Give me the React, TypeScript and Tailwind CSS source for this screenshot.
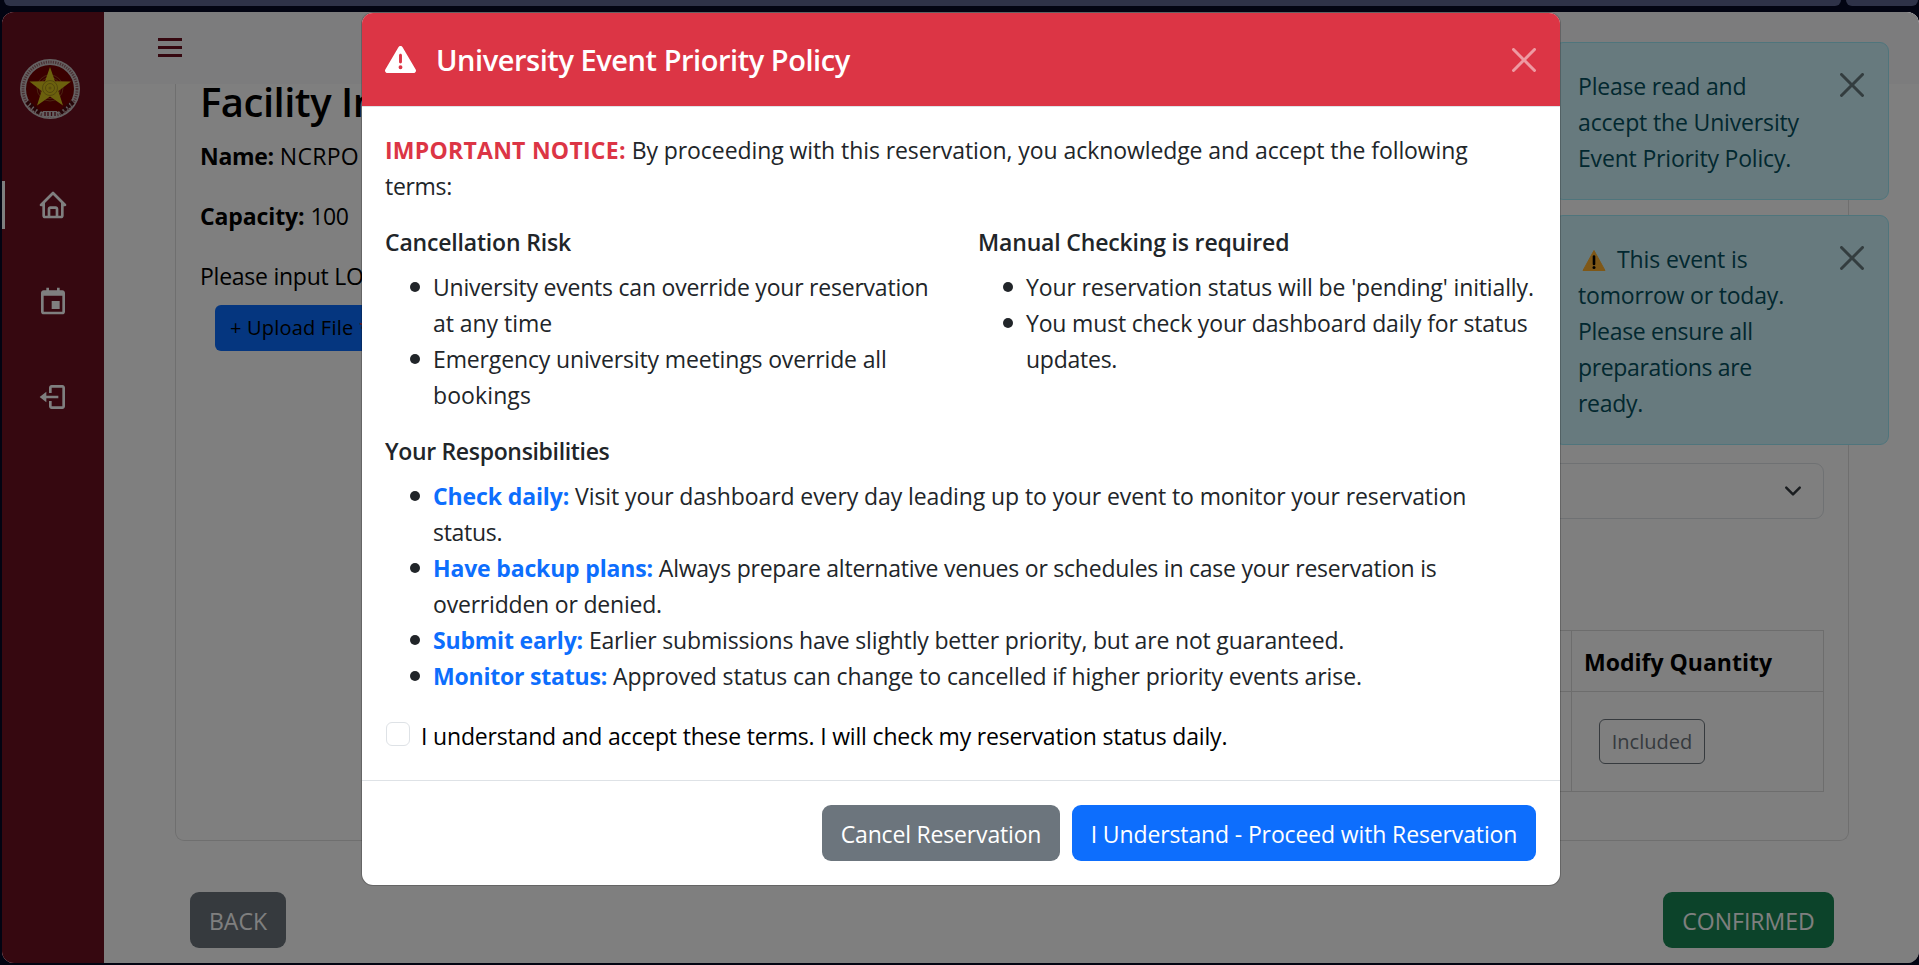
import type { ReactNode } from "react";
import { BiCalendarEvent, BiHome } from "react-icons/bi";
import { FaTriangleExclamation } from "react-icons/fa6";

function ExitIcon() {
  return (
    <svg viewBox="0 0 24 24" className="size-8" fill="currentColor" aria-hidden="true">
      <path d="m2 12 5 4v-3h9v-2H7V8z" />
      <path d="M19 3h-8c-1.1 0-2 .9-2 2v4h2V5h8v14h-8v-4H9v4c0 1.1.9 2 2 2h8c1.1 0 2-.9 2-2V5c0-1.1-.9-2-2-2z" />
    </svg>
  );
}

function CloseIcon({ className }: { className: string }) {
  return (
    <svg viewBox="0 0 16 16" className={className} fill="currentColor" aria-hidden="true">
      <path d="M.293.293a1 1 0 0 1 1.414 0L8 6.586 14.293.293a1 1 0 1 1 1.414 1.414L9.414 8l6.293 6.293a1 1 0 0 1-1.414 1.414L8 9.414l-6.293 6.293a1 1 0 0 1-1.414-1.414L6.586 8 .293 1.707a1 1 0 0 1 0-1.414z" />
    </svg>
  );
}

function Seal() {
  return (
    <svg viewBox="0 0 60 60" className="size-[60px]" aria-hidden="true">
      <circle cx="30" cy="30" r="30" fill="#cbc3c4" />
      <circle cx="30" cy="30" r="27" fill="none" stroke="#7a3038" strokeWidth="2.8" strokeDasharray="1.3 1.1" opacity=".65" />
      <circle cx="30" cy="30" r="24" fill="#740000" />
      <path d="M7 43 20 54M53 43 40 54" stroke="#4a0a10" strokeWidth="4.5" strokeDasharray="3 1.5" />
      <rect x="23" y="52" width="14" height="6" fill="#cbc3c4" />
      <path d="M25 53v4M28 53v4M31.500 53v4M35 53v4" stroke="#6d1020" strokeWidth="1.3" />
      <circle cx="30" cy="29" r="13" fill="none" stroke="#a05a2a" strokeWidth=".8" />
      <circle cx="30" cy="29" r="10.500" fill="none" stroke="#a05a2a" strokeWidth=".8" />
      <path d="m30 8 5 14.200 16 .3-12.600 9.500L43 46.500l-13-9-13 9L21.600 32 9.500 22.500l15.500-.3z" fill="#d8c21a" />
      <circle cx="30" cy="29" r="7.500" fill="none" stroke="#a8901a" strokeWidth="1" />
      <circle cx="30" cy="29" r="4.500" fill="none" stroke="#a8901a" strokeWidth="1" />
      <circle cx="30" cy="29" r="1.500" fill="#b49a1c" />
    </svg>
  );
}

function WarningEmoji() {
  return (
    <svg viewBox="0 0 24 22" className="mr-[11px] ml-1 inline-block h-[22px] w-6 align-[-3px]" aria-hidden="true">
      <path d="M12 1.500 23 21.500H1z" fill="#ffb02e" stroke="#ffb02e" strokeWidth="1" strokeLinejoin="round" />
      <path d="M12 7.500v7.500" stroke="#000" strokeWidth="2.600" strokeLinecap="round" />
      <circle cx="12" cy="18.600" r="1.500" fill="#000" />
    </svg>
  );
}

function Line({ className = "", children }: { className?: string; children: ReactNode }) {
  return <span className={`block whitespace-nowrap ${className}`}>{children}</span>;
}

function Item({ children }: { children: ReactNode }) {
  return (
    <li className="flex">
      <span className="mt-[13px] mr-[13px] ml-[25px] size-[10px] shrink-0 rounded-full bg-[#212529]" />
      <div>{children}</div>
    </li>
  );
}

function Alert({ className, children }: { className: string; children: ReactNode }) {
  return (
    <div
      className={`flex w-[335px] justify-between rounded-[9px] border border-[#9eeaf9] bg-[#cff4fc] pt-[25px] pr-6 pb-[23px] pl-[23px] text-[#055160] ${className}`}
    >
      <div>{children}</div>
      <CloseIcon className="mt-[5px] size-6 shrink-0 text-black/50" />
    </div>
  );
}

export default function App() {
  return (
    <div className="relative flex h-[965px] w-[1919px] flex-col overflow-hidden bg-[#020412] font-['Open_Sans','Noto_Sans',sans-serif] text-[23px] leading-9 text-black">
      <div className="flex h-3 shrink-0 gap-[5px] pl-1">
        <div className="h-1.5 w-[1837px] rounded-b-[10px] bg-[#2e3248]" />
        <div className="h-1.5 w-[72px] rounded-b-[10px] bg-[#2e3248]" />
      </div>

      <div className="relative ml-0.5 flex h-[951px] shrink-0 overflow-hidden rounded-[12px] bg-white">
        <aside className="flex w-[102px] shrink-0 flex-col bg-[#6d1020] text-white">
          <div className="flex h-[169px] justify-center pt-[47px] pr-[6px]">
            <Seal />
          </div>
          <nav className="flex flex-col gap-12">
            <div className="flex h-12 items-center border-l-[3px] border-white pl-8">
              <BiHome className="size-8" />
            </div>
            <div className="flex h-12 items-center pl-[35px]">
              <BiCalendarEvent className="size-8" />
            </div>
            <div className="flex h-12 items-center pl-[35px]">
              <ExitIcon />
            </div>
          </nav>
        </aside>

        <main className="flex w-[1815px] flex-col">
          <header className="flex h-[72px] shrink-0 flex-col gap-[5px] bg-[#f8f8fb] pt-[26px] pl-[54px]">
            <span className="h-[3px] w-6 bg-[#6d1020]" />
            <span className="h-[3px] w-6 bg-[#6d1020]" />
            <span className="h-[3px] w-6 bg-[#6d1020]" />
          </header>

          <section className="ml-[71px] flex h-[757px] w-[1674px] shrink-0 justify-between rounded-b-[9px] border border-t-0 border-[#dfdfdf] pl-6">
            <div className="w-[420px]">
              <h2 className="-mt-[6px] text-[40px] leading-[48px] font-semibold tracking-[-0.5px] whitespace-nowrap">Facility Information</h2>
              <p className="mt-3 whitespace-nowrap">
                <strong className="tracking-[-0.3px]">Name:</strong> <span className="tracking-[0.3px]">NCRPO</span>
              </p>
              <p className="mt-6 whitespace-nowrap">
                <strong className="tracking-[-0.1px]">Capacity:</strong> <span className="tracking-[-0.6px]">100</span>
              </p>
              <p className="mt-6 tracking-[-0.25px] whitespace-nowrap">Please input LOI</p>
              <button className="mt-[11px] ml-[15px] block h-[46px] w-[160px] rounded-md bg-[#0a6cff] pl-[15px] text-left text-[20px] tracking-[0.2px] whitespace-nowrap">
                + Upload File <span className="text-[#dc3545]">*</span>
              </button>
            </div>

            <div className="flex w-[300px] flex-col pt-[379px] pr-[24px]">
              <div className="flex h-14 items-center justify-end rounded-[9px] border border-[#dee2e6] pr-[21px]">
                <svg viewBox="0 0 16 16" className="size-[18px]" fill="none" stroke="#343a40" strokeWidth="2.200" strokeLinecap="round" strokeLinejoin="round" aria-hidden="true">
                  <path d="m2 5 6 6 6-6" />
                </svg>
              </div>
              <div className="mt-[111px] grid h-[162px] grid-cols-[1fr_251px] grid-rows-[61px_1fr] border border-[#dadada]">
                <div className="border-r border-b border-[#dadada]" />
                <div className="border-b border-[#dadada] pt-[13px] pl-3 font-bold whitespace-nowrap">Modify Quantity</div>
                <div className="border-r border-[#dadada]" />
                <div className="pt-[27px] pl-[27px]">
                  <button className="flex h-[45px] w-[106px] items-center justify-center rounded-md border border-[#6c757d] text-[20px] text-[#6c757d]">
                    Included
                  </button>
                </div>
              </div>
            </div>
          </section>

          <div className="mt-[51px] flex justify-between pr-[85px] pl-[86px] text-white">
            <button className="h-14 w-24 rounded-[9px] bg-[#6c757d] pt-px">BACK</button>
            <button className="h-14 w-[171px] rounded-[9px] bg-[#198754] pt-px">CONFIRMED</button>
          </div>
        </main>

        <div className="absolute top-[30px] right-[30px] flex flex-col gap-[15px]">
          <Alert className="h-[158px]">
            <Line className="tracking-[-0.2px]">Please read and</Line>
            <Line className="tracking-[-0.15px]">accept the University</Line>
            <Line className="tracking-[-0.18px]">Event Priority Policy.</Line>
          </Alert>
          <Alert className="h-[230px]">
            <Line className="tracking-[-0.1px]">
              <WarningEmoji />
              This event is
            </Line>
            <Line className="tracking-[-0.18px]">tomorrow or today.</Line>
            <Line className="tracking-[-0.3px]">Please ensure all</Line>
            <Line className="tracking-[-0.35px]">preparations are</Line>
            <Line className="tracking-[-0.3px]">ready.</Line>
          </Alert>
        </div>

        <div className="absolute inset-0 bg-black/50" />
      </div>

      <div className="absolute top-3 left-[361px] flex h-[874px] w-[1200px] flex-col overflow-hidden rounded-[12px] border border-black/20 bg-white bg-clip-padding text-[#212529]">
        <div className="flex h-[94px] shrink-0 items-center justify-between border-b border-[#dee2e6] bg-[#dc3545] pr-6 pl-[23px] text-white">
          <div className="flex items-center">
            <FaTriangleExclamation className="size-[31px]" />
            <h1 className="ml-5 text-[29px] font-semibold tracking-[-0.45px] whitespace-nowrap">University Event Priority Policy</h1>
          </div>
          <CloseIcon className="size-6 text-white/50" />
        </div>

        <div className="flex h-[673px] shrink-0 flex-col pt-[25px] pl-[23px]">
          <p>
            <Line>
              <strong className="tracking-[0.25px] text-[#dc3545]">IMPORTANT NOTICE:</strong>{" "}
              <span className="tracking-[-0.08px]">By proceeding with this reservation, you acknowledge and accept the following</span>
            </Line>
            <Line className="tracking-[-0.3px]">terms:</Line>
          </p>

          <div className="mt-5 flex">
            <div className="w-[593px]">
              <h2 className="mb-[9px] leading-9 font-semibold tracking-[-0.18px]">Cancellation Risk</h2>
              <ul>
                <Item>
                  <Line className="tracking-[-0.22px]">University events can override your reservation</Line>
                  <Line className="tracking-[-0.05px]">at any time</Line>
                </Item>
                <Item>
                  <Line className="tracking-[-0.14px]">Emergency university meetings override all</Line>
                  <Line className="tracking-[0.1px]">bookings</Line>
                </Item>
              </ul>
            </div>
            <div>
              <h2 className="mb-[9px] leading-9 font-semibold tracking-[-0.17px]">Manual Checking is required</h2>
              <ul>
                <Item>
                  <Line className="tracking-[-0.13px]">Your reservation status will be 'pending' initially.</Line>
                </Item>
                <Item>
                  <Line className="tracking-[-0.17px]">You must check your dashboard daily for status</Line>
                  <Line className="tracking-[-0.25px]">updates.</Line>
                </Item>
              </ul>
            </div>
          </div>

          <h2 className="mt-5 mb-[9px] leading-9 font-semibold tracking-[-0.33px]">Your Responsibilities</h2>
          <ul>
            <Item>
              <Line>
                <strong className="tracking-[-0.12px] text-[#0d6efd]">Check daily:</strong>{" "}
                <span className="tracking-[-0.1px]">Visit your dashboard every day leading up to your event to monitor your reservation</span>
              </Line>
              <Line className="tracking-[-0.3px]">status.</Line>
            </Item>
            <Item>
              <Line>
                <strong className="tracking-[-0.17px] text-[#0d6efd]">Have backup plans:</strong>{" "}
                <span className="tracking-[-0.23px]">Always prepare alternative venues or schedules in case your reservation is</span>
              </Line>
              <Line className="tracking-[-0.2px]">overridden or denied.</Line>
            </Item>
            <Item>
              <Line>
                <strong className="tracking-[-0.2px] text-[#0d6efd]">Submit early:</strong>{" "}
                <span className="tracking-[-0.18px]">Earlier submissions have slightly better priority, but are not guaranteed.</span>
              </Line>
            </Item>
            <Item>
              <Line>
                <strong className="tracking-[-0.2px] text-[#0d6efd]">Monitor status:</strong>{" "}
                <span className="tracking-[-0.1px]">Approved status can change to cancelled if higher priority events arise.</span>
              </Line>
            </Item>
          </ul>

          <label className="mt-6 flex text-black">
            <span className="mt-1 mr-3 ml-px size-6 rounded-md border border-[#dee2e6] bg-white" />
            <Line className="-ml-px tracking-[-0.18px]">I understand and accept these terms. I will check my reservation status daily.</Line>
          </label>
        </div>

        <div className="flex grow items-center justify-end gap-3 border-t border-[#dee2e6] pr-6 whitespace-nowrap text-white">
          <button className="h-14 w-[238px] rounded-[9px] bg-[#6c757d] pt-px tracking-[-0.18px]">Cancel Reservation</button>
          <button className="h-14 w-[464px] rounded-[9px] bg-[#0d6efd] pt-px tracking-[-0.13px]">I Understand - Proceed with Reservation</button>
        </div>
      </div>
    </div>
  );
}
